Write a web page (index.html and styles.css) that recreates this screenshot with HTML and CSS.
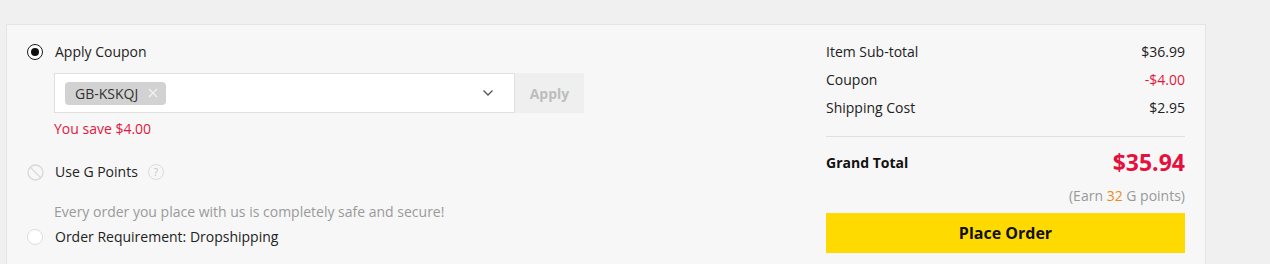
FILE: index.html
```html
<!DOCTYPE html>
<html>
<head>
<meta charset="utf-8">
<link rel="stylesheet" href="styles.css">
</head>
<body>
<div class="card">
  <div class="left">
    <div class="opt">
      <span class="radio on"></span>
      <span class="label">Apply Coupon</span>
    </div>
    <div class="coupon">
      <div class="select">
        <span class="chip">GB-KSKQJ
          <svg class="x" width="10" height="10" viewBox="0 0 10 10"><path d="M1 1L9 9M9 1L1 9" stroke="#f2f2f2" stroke-width="1.3"/></svg>
        </span>
        <svg class="chev" width="12" height="8" viewBox="0 0 12 8"><path d="M1.5 1.5L6 6L10.5 1.5" fill="none" stroke="#555" stroke-width="1.3"/></svg>
      </div>
      <button class="apply">Apply</button>
    </div>
    <div class="save">You save $4.00</div>
    <div class="opt gp">
      <svg class="ban" width="17" height="17" viewBox="0 0 17 17"><circle cx="8.5" cy="8.5" r="7.5" fill="none" stroke="#d8d8d8" stroke-width="1.3"/><path d="M3.4 3.4L13.6 13.6" stroke="#d8d8d8" stroke-width="1.3"/></svg>
      <span class="label">Use G Points</span>
      <span class="help">?</span>
    </div>
    <div class="note">Every order you place with us is completely safe and secure!</div>
    <div class="opt req">
      <span class="radio"></span>
      <span class="label">Order Requirement: Dropshipping</span>
    </div>
  </div>
  <div class="right">
    <div class="line"><span>Item Sub-total</span><span>$36.99</span></div>
    <div class="line"><span>Coupon</span><span class="red">-$4.00</span></div>
    <div class="line"><span>Shipping Cost</span><span>$2.95</span></div>
    <div class="grand"><span class="gl">Grand Total</span><span class="gv">$35.94</span></div>
    <div class="earn">(Earn <span class="pts">32</span> G points)</div>
    <button class="place">Place Order</button>
  </div>
</div>
</body>
</html>
```
FILE: styles.css
```css
html, body {
  margin: 0;
  padding: 0;
  background: #f0f0f0;
  font-family: "Open Sans", "Liberation Sans", sans-serif;
  color: #222;
}
body {
  padding: 24px 0 0 6px;
  height: 264px;
  box-sizing: border-box;
  overflow: hidden;
}
.card {
  width: 1198px;
  height: 239px;
  background: #f7f7f7;
  border: 1px solid #e4e4e4;
  border-bottom: none;
  display: flex;
  justify-content: space-between;
  box-sizing: content-box;
}
.left {
  padding: 17px 0 0 20px;
  width: 560px;
}
.opt {
  display: flex;
  align-items: center;
  height: 20px;
  font-size: 14px;
  line-height: 20px;
}
.radio {
  width: 16px;
  height: 16px;
  box-sizing: border-box;
  border-radius: 50%;
  border: 1px solid #ddd;
  background: #fff;
  margin-right: 12px;
  position: relative;
}
.radio.on {
  border: 1.6px solid #1a1a1a;
  background: #fff;
}
.radio.on::after {
  content: "";
  position: absolute;
  left: 50%;
  top: 50%;
  width: 8px;
  height: 8px;
  margin: -4px 0 0 -4px;
  border-radius: 50%;
  background: #111;
}
.coupon {
  display: flex;
  margin: 11px 0 0 27px;
  height: 40px;
}
.select {
  width: 461px;
  height: 40px;
  box-sizing: border-box;
  background: #fff;
  border: 1px solid #e0e0e0;
  display: flex;
  align-items: center;
  justify-content: space-between;
  padding: 0 20px 0 10px;
}
.chip {
  display: flex;
  align-items: center;
  height: 23px;
  padding: 0 8px 0 10px;
  background: #d2d2d2;
  border-radius: 4px;
  font-size: 14px;
  color: #333;
}
.chip .x {
  margin-left: 10px;
}
.apply {
  width: 69px;
  height: 40px;
  border: none;
  background: #efefef;
  color: #bdbdbd;
  font-family: inherit;
  font-weight: 700;
  font-size: 14px;
  padding: 0;
}
.save {
  margin: 6px 0 0 27px;
  font-size: 14px;
  line-height: 20px;
  color: #e4173f;
}
.gp {
  margin-top: 23px;
}
.ban {
  margin-right: 11px;
}
.help {
  width: 16px;
  height: 16px;
  box-sizing: border-box;
  border: 1px solid #dcdcdc;
  border-radius: 50%;
  font-size: 10px;
  line-height: 14px;
  text-align: center;
  color: #c4c4c4;
  margin-left: 10px;
}
.note {
  margin: 20px 0 0 27px;
  font-size: 14px;
  line-height: 20px;
  color: #9a9a9a;
}
.req {
  margin-top: 5px;
}
.right {
  width: 359px;
  padding: 13px 20px 0 0;
}
.line {
  display: flex;
  justify-content: space-between;
  font-size: 14px;
  line-height: 28px;
  color: #222;
}
.line:nth-child(3) {
  padding-bottom: 14px;
  border-bottom: 1px solid #e0e0e0;
}
.red {
  color: #e4173f;
}
.grand {
  display: flex;
  justify-content: space-between;
  align-items: center;
  padding-top: 11px;
  height: 28px;
}
.gl {
  font-weight: 700;
  font-size: 14px;
  color: #111;
}
.gv {
  font-weight: 700;
  font-size: 23px;
  color: #e5103d;
}
.earn {
  margin-top: 10px;
  text-align: right;
  font-size: 14px;
  line-height: 20px;
  color: #999;
}
.pts {
  color: #f08a24;
}
.place {
  display: block;
  width: 100%;
  height: 40px;
  margin-top: 7px;
  border: none;
  background: #ffda00;
  font-family: inherit;
  font-weight: 700;
  font-size: 16px;
  color: #111;
  padding: 0;
}
```
